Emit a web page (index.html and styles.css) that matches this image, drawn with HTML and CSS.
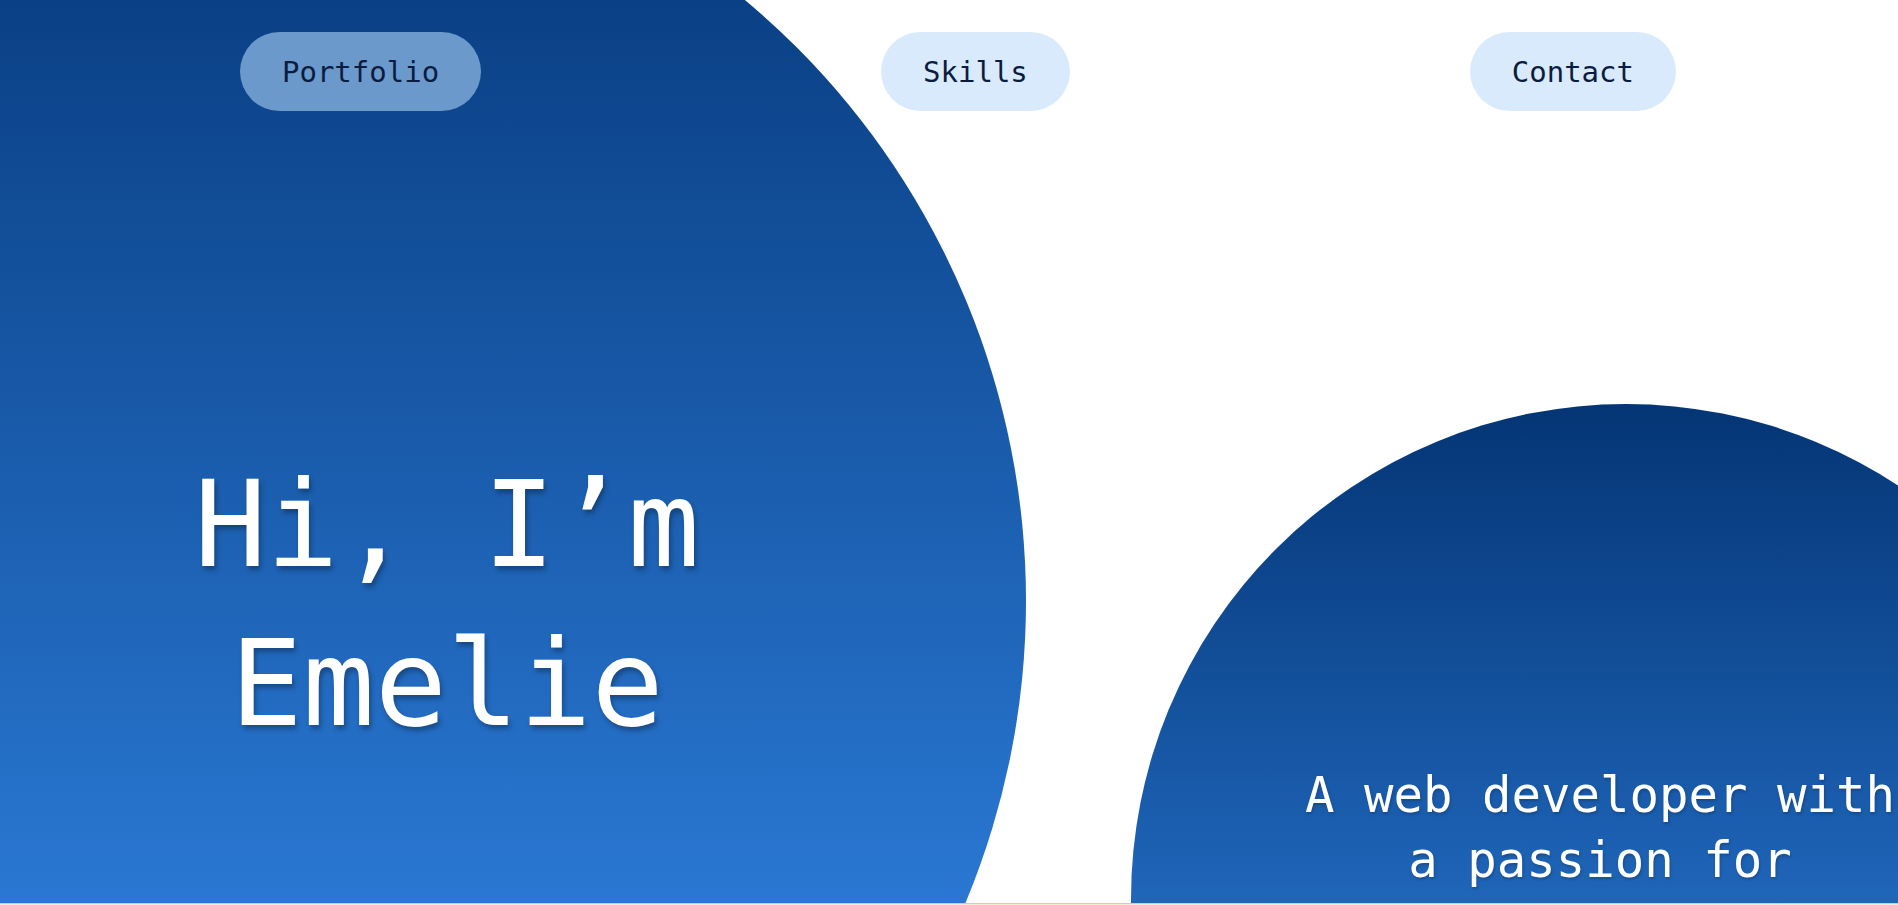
FILE: index.html
```html
<!DOCTYPE html>
<html lang="en">
<head>
<meta charset="utf-8">
<title>Emelie – Portfolio</title>
<link rel="stylesheet" href="styles.css">
</head>
<body>
  <section class="hero">
    <div class="blob blob-left"></div>
    <div class="blob blob-right"></div>
    <nav class="nav">
      <a class="pill pill-active" href="#portfolio">Portfolio</a>
      <a class="pill" href="#skills">Skills</a>
      <a class="pill" href="#contact">Contact</a>
    </nav>
    <div class="intro">
      <h1 class="title">Hi, I’m<br>Emelie</h1>
      <p class="tagline">A web developer with a passion for</p>
    </div>
  </section>
  <section class="next"></section>
</body>
</html>
```

FILE: styles.css
```css
html, body {
  margin: 0;
  padding: 0;
  background: #ffffff;
}

body {
  font-family: "DejaVu Sans Mono", "Liberation Mono", monospace;
  overflow-x: hidden;
}

.hero {
  position: relative;
  height: 903px;
  overflow: hidden;
}

.blob {
  position: absolute;
  z-index: 0;
  border-radius: 50%;
  background: linear-gradient(180deg, #043575 0%, #3a95fc 100%);
}

.blob-left {
  left: -540px;
  top: -182px;
  width: 1566px;
  height: 1566px;
}

.blob-right {
  left: 1131px;
  top: 404px;
  width: 990px;
  height: 990px;
}

.nav {
  position: relative;
  z-index: 1;
  display: flex;
  justify-content: space-around;
  align-items: center;
  padding: 32px 22px 0 40px;
}

.pill {
  display: block;
  padding: 22px 42px 20px;
  border-radius: 40px;
  background: #d9eafd;
  color: #0a1d3f;
  font-size: 29px;
  line-height: 37px;
  text-decoration: none;
  white-space: nowrap;
}

.pill-active {
  background: #6b99cc;
}

.intro {
  position: relative;
  z-index: 1;
  display: grid;
  grid-template-columns: 894px 1fr;
  margin-top: 334px;
  color: #ffffff;
}

.title {
  grid-column: 1;
  grid-row: 1;
  margin: 0;
  font-size: 120px;
  line-height: 159px;
  font-weight: 400;
  text-align: center;
  text-shadow: 2px 4px 5px rgba(0, 0, 0, 0.3);
}

.tagline {
  grid-column: 2;
  grid-row: 2;
  width: 620px;
  margin: 0 0 0 396px;
  font-size: 49px;
  line-height: 65px;
  text-align: center;
  text-shadow: 1px 2px 3px rgba(0, 0, 0, 0.2);
}

.next {
  height: 200px;
  background: #f1ecd0;
  border-top: 1px solid #d4cda8;
}
```
